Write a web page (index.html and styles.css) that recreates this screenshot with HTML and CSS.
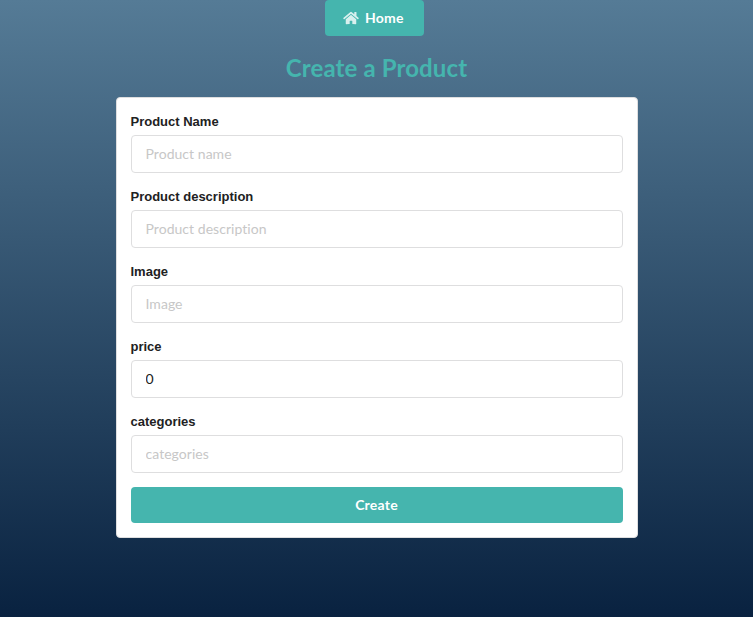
FILE: index.html
```
<!DOCTYPE html>
<html lang="en">
<head>
<meta charset="utf-8">
<title>Create a Product</title>
<link rel="stylesheet" href="styles.css">
</head>
<body>
<main class="page">
  <a class="button home">
    <svg class="icon" viewBox="0 0 576 512" aria-hidden="true"><path d="M280.4 148.3 96 300.1V464a16 16 0 0 0 16 16l112.1-.3a16 16 0 0 0 15.9-16V368a16 16 0 0 1 16-16h64a16 16 0 0 1 16 16v95.6a16 16 0 0 0 16 16.1L464 480a16 16 0 0 0 16-16V300L295.7 148.3a12.2 12.2 0 0 0-15.3 0zM571.6 251.5 488 182.6V44a12 12 0 0 0-12-12h-56a12 12 0 0 0-12 12v72.6l-89.5-73.6a48 48 0 0 0-61 0L4.3 251.5a12 12 0 0 0-1.6 16.9l25.5 31a12 12 0 0 0 16.9 1.6L280.4 107.2a12.2 12.2 0 0 1 15.3 0L530.9 301a12 12 0 0 0 16.9-1.6l25.5-31a12 12 0 0 0-1.7-16.9z"/></svg>
    <span>Home</span>
  </a>
  <h2 class="title">Create a Product</h2>
  <form class="card">
    <div class="field"><label for="name">Product Name</label><input id="name" type="text" placeholder="Product name"></div>
    <div class="field"><label for="description">Product description</label><input id="description" type="text" placeholder="Product description"></div>
    <div class="field"><label for="image">Image</label><input id="image" type="text" placeholder="Image"></div>
    <div class="field"><label for="price">price</label><input id="price" type="text" value="0"></div>
    <div class="field"><label for="categories">categories</label><input id="categories" type="text" placeholder="categories"></div>
    <button class="button" type="button">Create</button>
  </form>
</main>
</body>
</html>
```
FILE: styles.css
```
* { box-sizing: border-box; }
html { background: #fff; }
body { margin: 0; font-family: Lato, sans-serif; font-size: 14px; }
.page {
  height: 617px;
  display: flex;
  flex-direction: column;
  align-items: center;
  background: linear-gradient(#557b96, #092240);
}
.button {
  display: flex;
  align-items: center;
  justify-content: center;
  height: 36px;
  border: 0;
  border-radius: 4px;
  background: #45b5ae;
  color: #fff;
  font: 700 14px/14px Lato, sans-serif;
  letter-spacing: .22px;
}
.home {
  width: 99px;
  margin-right: 4px;
  padding-left: 18px;
  justify-content: flex-start;
}
.icon { width: 16px; height: 14px; margin-right: 6px; fill: #fff; opacity: .8; }
.title {
  margin: 16px 0 13px;
  color: #45b5ae;
  font-size: 24px;
  font-weight: 700;
  line-height: 32px;
  letter-spacing: .12px;
}
.card {
  width: 522px;
  padding: 14px;
  border: 1px solid #dededf;
  border-radius: 4px;
  background: #fff;
}
.field { margin-bottom: 14px; }
.field label {
  display: block;
  height: 19px;
  margin-bottom: 4px;
  color: #212122;
  font: 700 13px/19px "Liberation Sans", sans-serif;
}
.field input {
  display: block;
  width: 100%;
  height: 38px;
  padding: 8px 14px 10px;
  border: 1px solid #dededf;
  border-radius: 4px;
  color: #212122;
  font: 14px/17px Lato, sans-serif;
  font-variant-ligatures: none;
  letter-spacing: .04px;
}
.field input::placeholder { color: #c7c7c7; }
.card .button { width: 100%; }
```
